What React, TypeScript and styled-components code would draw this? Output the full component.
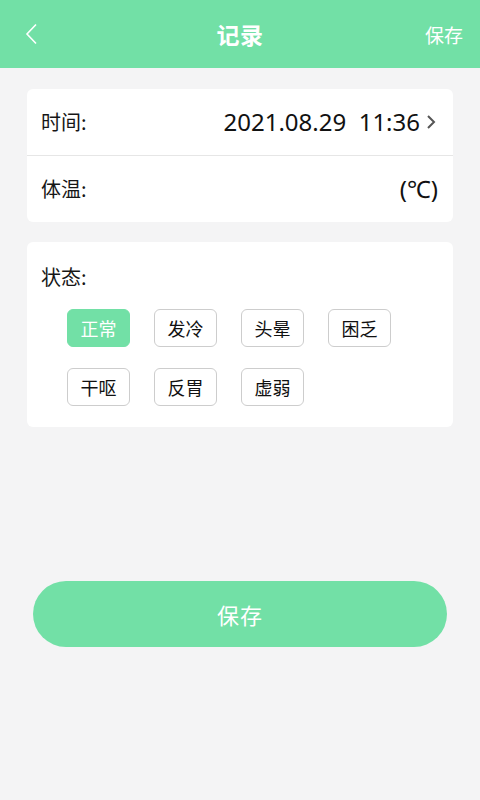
import React from "react";
import styled, { createGlobalStyle } from "styled-components";

const GREEN = "#72e0a6";

const Global = createGlobalStyle`
  html, body { margin: 0; padding: 0; background: #f4f4f5; }
  body { font-family: "Noto Sans", "Noto Sans CJK SC", sans-serif; color: #111; }
  * { box-sizing: border-box; }
`;

const Page = styled.div`
  width: 480px;
  min-height: 800px;
  background: #f4f4f5;
  display: flex;
  flex-direction: column;
`;

const Header = styled.header`
  height: 68px;
  background: ${GREEN};
  display: grid;
  grid-template-columns: 80px 1fr 80px;
  align-items: center;
  color: #fff;
`;

const BackButton = styled.button`
  background: none;
  border: 0;
  padding: 0 0 0 24px;
  height: 100%;
  display: flex;
  align-items: center;
  cursor: pointer;
`;

const Title = styled.h1`
  margin: 0;
  text-align: center;
  font-size: 23px;
  font-weight: 700;
  font-family: "Noto Sans CJK SC", sans-serif;
  letter-spacing: 0.5px;
`;

const HeaderAction = styled.span`
  justify-self: end;
  padding-right: 17px;
  font-size: 19px;
  font-family: "Noto Sans CJK SC", sans-serif;
`;

const Card = styled.section<{ $top: number }>`
  margin: ${(p) => p.$top}px 27px 0;
  background: #fff;
  border-radius: 6px;
`;

const Row = styled.div<{ $divider?: boolean }>`
  height: ${(p) => (p.$divider ? 67 : 66)}px;
  display: flex;
  align-items: center;
  justify-content: space-between;
  padding: 0 15px 0 14px;
  border-bottom: ${(p) => (p.$divider ? "1px solid #e6e6e6" : "none")};
`;

const Label = styled.span`
  display: block;
  font-size: 20px;
  line-height: 24px;
  font-family: "Noto Sans CJK SC", sans-serif;
  color: #161616;
`;

const Value = styled.span`
  display: flex;
  align-items: center;
  gap: 6px;
  font-size: 24px;
  line-height: 30px;
  color: #111;
  font-family: "Noto Sans", sans-serif;
`;

const Spaced = styled.span`
  white-space: pre;
`;

const Chevron = styled.svg`
  margin-right: 2px;
`;

const StatusBody = styled.div`
  padding: 23px 14px 21px;
`;

const TagGrid = styled.div`
  margin: 20px 0 0 26px;
  display: grid;
  grid-template-columns: repeat(4, 63px);
  column-gap: 24px;
  row-gap: 21px;
`;

const Tag = styled.button<{ $active?: boolean }>`
  height: 38px;
  border-radius: 6px;
  border: 1.5px solid ${(p) => (p.$active ? GREEN : "#cdcdcd")};
  background: ${(p) => (p.$active ? GREEN : "#fff")};
  color: ${(p) => (p.$active ? "#fff" : "#111")};
  font-size: 18px;
  font-family: "Noto Sans CJK SC", sans-serif;
  padding: 0;
  cursor: pointer;
`;

const SaveButton = styled.button`
  margin: 154px 33px 0;
  height: 66px;
  border: 0;
  border-radius: 33px;
  background: ${GREEN};
  color: #fff;
  font-size: 22px;
  font-family: "Noto Sans CJK SC", sans-serif;
  letter-spacing: 1px;
  cursor: pointer;
`;

const tags = ["正常", "发冷", "头晕", "困乏", "干呕", "反胃", "虚弱"];

export default function App() {
  return (
    <Page>
      <Global />
      <Header>
        <BackButton aria-label="返回">
          <svg width="16" height="22" viewBox="0 0 16 22">
            <path d="M12 1.5 L3 11 L12 20.5" fill="none" stroke="#fff" strokeWidth="1.6" />
          </svg>
        </BackButton>
        <Title>记录</Title>
        <HeaderAction>保存</HeaderAction>
      </Header>

      <Card $top={21}>
        <Row $divider>
          <Label>时间:</Label>
          <Value>
            <Spaced>2021.08.29  11:36</Spaced>
            <Chevron width="10" height="16" viewBox="0 0 10 16">
              <path d="M2 2 L8 8 L2 14" fill="none" stroke="#555" strokeWidth="2" />
            </Chevron>
          </Value>
        </Row>
        <Row>
          <Label>体温:</Label>
          <Value>(℃)</Value>
        </Row>
      </Card>

      <Card $top={20}>
        <StatusBody>
          <Label>状态:</Label>
          <TagGrid>
            {tags.map((t, i) => (
              <Tag key={t} $active={i === 0}>
                {t}
              </Tag>
            ))}
          </TagGrid>
        </StatusBody>
      </Card>

      <SaveButton>保存</SaveButton>
    </Page>
  );
}
